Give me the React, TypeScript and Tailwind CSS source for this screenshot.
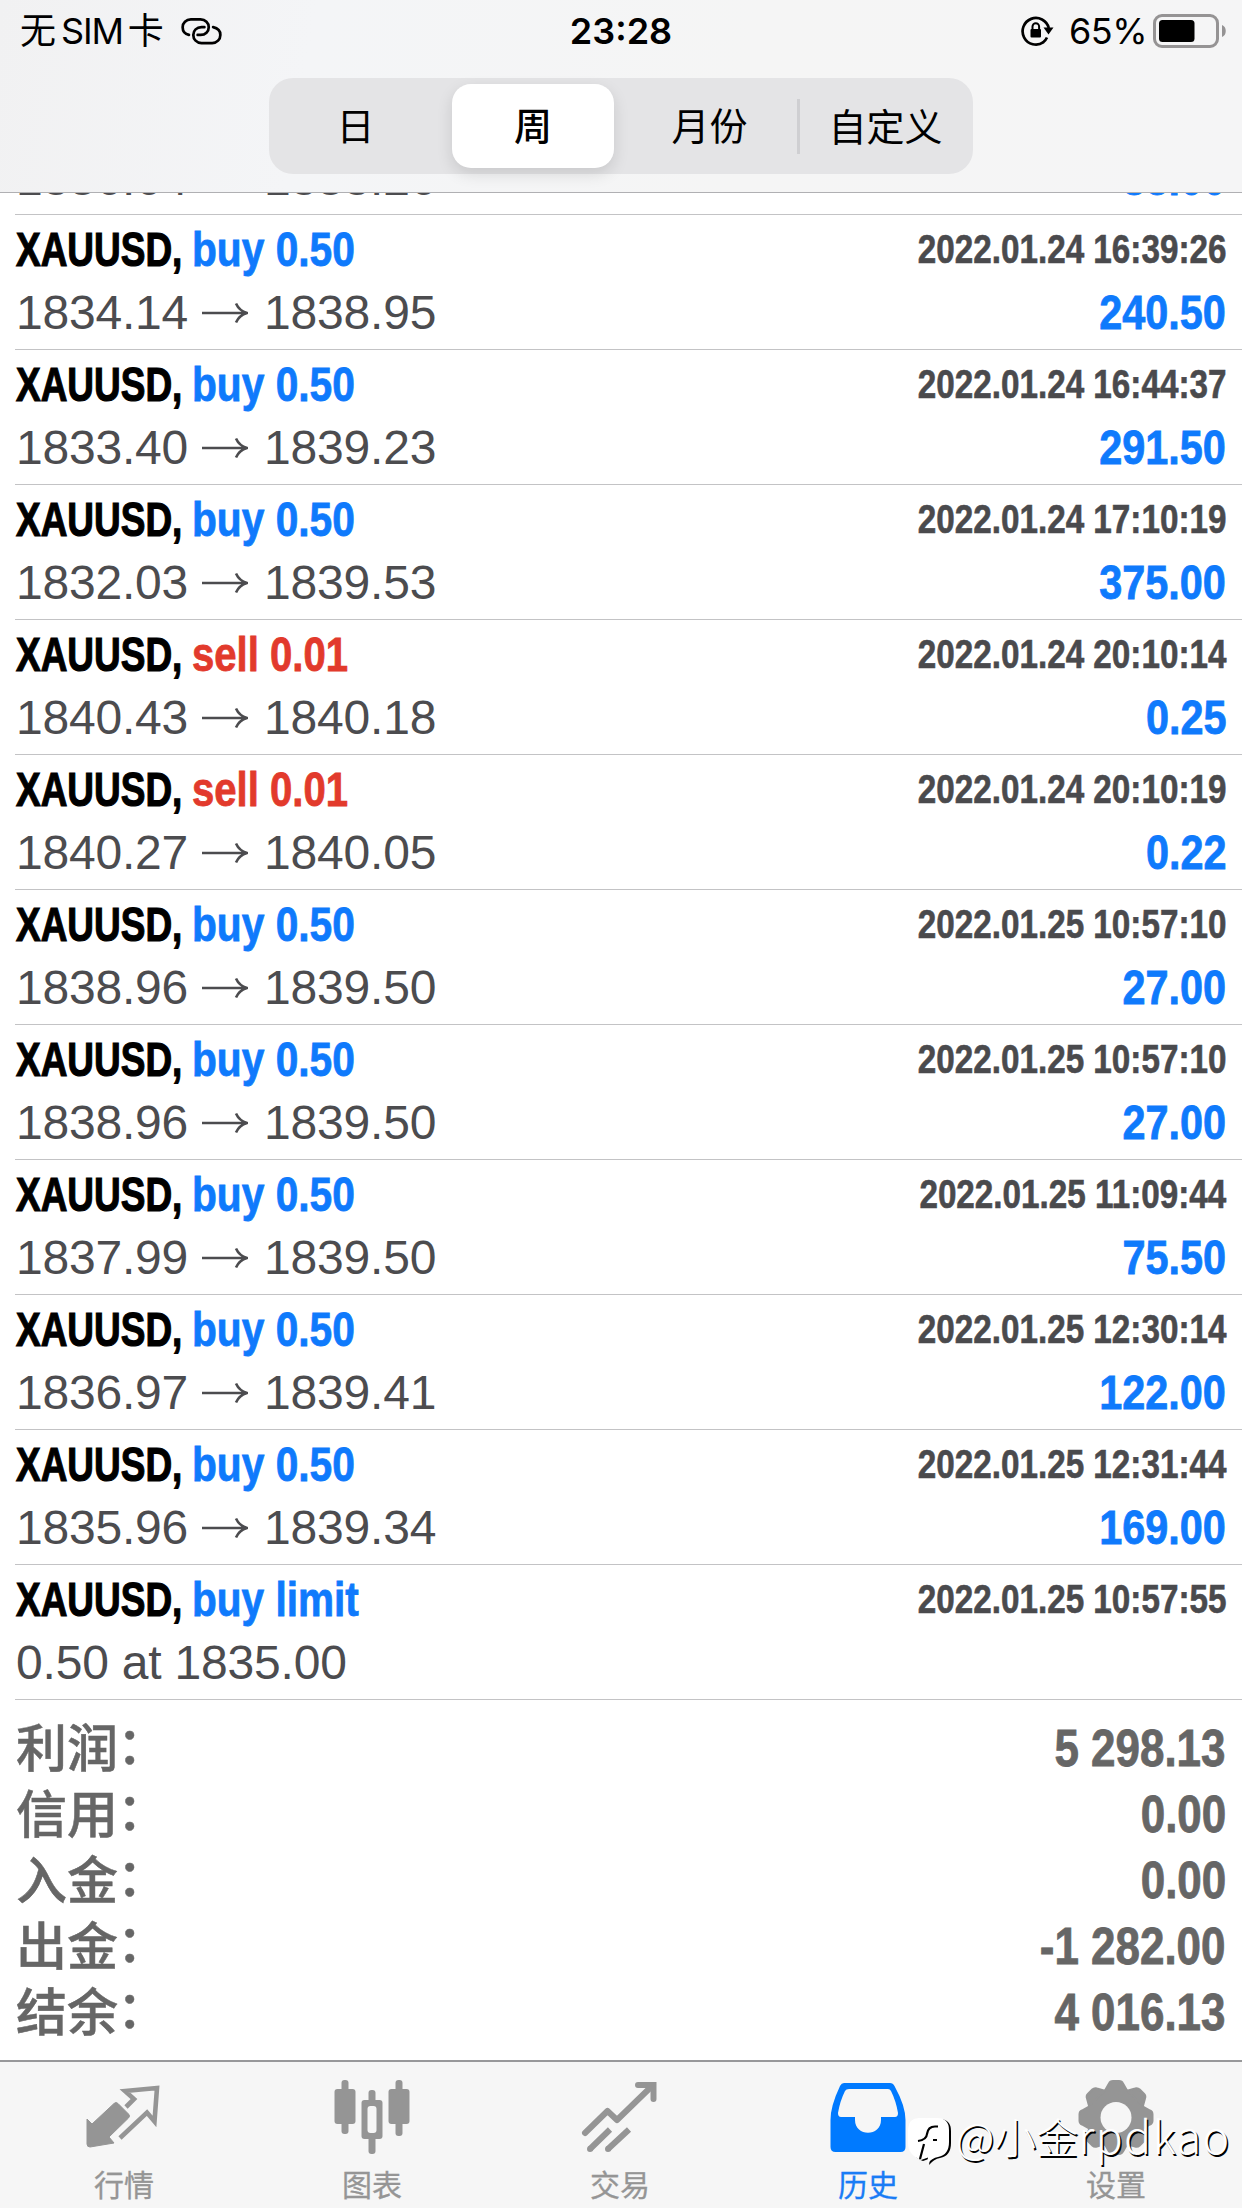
import React from "react";

type Side = "buy" | "sell" | "limit";
type Trade = { side: Side; action: string; from: string; to?: string; time: string; profit: string };

const trades: Trade[] = [
  { side: "buy", action: "buy 0.50", from: "1834.14", to: "1838.95", time: "2022.01.24 16:39:26", profit: "240.50" },
  { side: "buy", action: "buy 0.50", from: "1833.40", to: "1839.23", time: "2022.01.24 16:44:37", profit: "291.50" },
  { side: "buy", action: "buy 0.50", from: "1832.03", to: "1839.53", time: "2022.01.24 17:10:19", profit: "375.00" },
  { side: "sell", action: "sell 0.01", from: "1840.43", to: "1840.18", time: "2022.01.24 20:10:14", profit: "0.25" },
  { side: "sell", action: "sell 0.01", from: "1840.27", to: "1840.05", time: "2022.01.24 20:10:19", profit: "0.22" },
  { side: "buy", action: "buy 0.50", from: "1838.96", to: "1839.50", time: "2022.01.25 10:57:10", profit: "27.00" },
  { side: "buy", action: "buy 0.50", from: "1838.96", to: "1839.50", time: "2022.01.25 10:57:10", profit: "27.00" },
  { side: "buy", action: "buy 0.50", from: "1837.99", to: "1839.50", time: "2022.01.25 11:09:44", profit: "75.50" },
  { side: "buy", action: "buy 0.50", from: "1836.97", to: "1839.41", time: "2022.01.25 12:30:14", profit: "122.00" },
  { side: "buy", action: "buy 0.50", from: "1835.96", to: "1839.34", time: "2022.01.25 12:31:44", profit: "169.00" },
  { side: "limit", action: "buy limit", from: "0.50 at 1835.00", time: "2022.01.25 10:57:55", profit: "" },
];

const totals = [
  ["利润", "5 298.13"],
  ["信用", "0.00"],
  ["入金", "0.00"],
  ["出金", "-1 282.00"],
  ["结余", "4 016.13"],
];

const actionClass: Record<Side, string> = {
  buy: "scale-x-[0.848] text-[#0f7afc]",
  sell: "scale-x-[0.835] text-[#e23a2c]",
  limit: "scale-x-[0.845] text-[#0f7afc]",
};

function Arrow() {
  return (
    <svg className="ml-[14px] mr-[16px] h-[22px] w-[46px]" viewBox="0 0 46 22" fill="none" stroke="#4c4c4f" strokeWidth="2.600">
      <path d="M0 11H44M34 1.500C36 6 40 9.500 45 11C40 12.500 36 16 34 20.500" />
    </svg>
  );
}

function PriceLine({ from, to, profit }: { from: string; to?: string; profit: string }) {
  return (
    <div className="flex h-[56px] justify-between text-[48px] leading-[56px]">
      <div className="flex items-center pl-px tracking-[-0.2px] text-[#4c4c4f]">
        <span>{from}</span>
        {to && <Arrow />}
        {to && <span>{to}</span>}
      </div>
      <span className="inline-block origin-right scale-x-[0.862] font-bold text-[#0f7afc] [-webkit-text-stroke:0.8px_currentColor]">{profit}</span>
    </div>
  );
}

function TradeRow({ t }: { t: Trade }) {
  return (
    <div className="ml-[15px] h-[135px] whitespace-nowrap border-b border-[#c3c3c5] pr-4">
      <div className="flex h-[70px] justify-between font-bold leading-[70px]">
        <div className="flex pl-px text-[48px]">
          <div className="w-[176px]">
            <span className="inline-block origin-left scale-x-[0.77] text-black [-webkit-text-stroke:1.2px_currentColor]">XAUUSD,</span>
          </div>
          <span className={`inline-block origin-left [-webkit-text-stroke:0.8px_currentColor] ${actionClass[t.side]}`}>{t.action}</span>
        </div>
        <span className="inline-block origin-right scale-x-[0.831] text-[40px] leading-[68px] text-[#4a4a4d] [-webkit-text-stroke:0.6px_currentColor]">{t.time}</span>
      </div>
      <PriceLine from={t.from} to={t.to} profit={t.profit} />
    </div>
  );
}

function StatusBar() {
  return (
    <div className="grid h-[78px] grid-cols-3 font-['Inter','Noto_Sans_CJK_SC',sans-serif] text-[36px] leading-[63px] text-black">
      <div className="flex h-[62px] items-center gap-[17px] pl-[20px]">
        <div className="flex gap-[5px]">
          <span>无</span>
          <span className="tracking-[-1.2px]">SIM</span>
          <span>卡</span>
        </div>
        <svg className="h-[29px] w-[41px]" viewBox="0 0 42 30" fill="none" stroke="#000" strokeWidth="2.800" strokeLinecap="round">
          <path d="M8 18.500C4 17.500 1.500 14.500 1.500 10.500C1.500 6 5 2.500 10 2.500H20C25 2.500 28.500 6 28.500 10.500C28.500 15 25 18.500 20 18.500H17" />
          <path d="M33 10.500C37.500 11.500 40.500 14.500 40.500 18.500C40.500 23 37 27 32 27H21C16 27 12.500 23 12.500 18.500C12.500 14 16 10.500 21 10.500H24" />
        </svg>
      </div>
      <div className="text-center font-semibold">23:28</div>
      <div className="flex h-[62px] items-center justify-end pr-[14px]">
        <svg className="mr-[15px] h-[32px] w-[33px]" viewBox="0 0 33 32">
          <path d="M22.500 27.200A13.300 13.300 0 1 1 27.800 13" fill="none" stroke="#000" strokeWidth="2.700" />
          <path d="M26 22.500A13 13 0 0 1 22 27.500" fill="none" stroke="#000" strokeWidth="2.700" />
          <path d="M22.500 12.500H32.500L27.500 19.500Z" />
          <rect x="9.500" y="14" width="10.500" height="8.500" rx="1" />
          <path d="M11.500 15V11.500A3.300 3.300 0 0 1 18.100 11.500V15" fill="none" stroke="#000" strokeWidth="2" />
        </svg>
        <span className="mr-[6px] tracking-[-0.5px]">65%</span>
        <svg className="h-[36px] w-[75px]" viewBox="0 0 75 36">
          <rect x="1.500" y="2.500" width="63" height="31" rx="7.500" fill="none" stroke="#959394" strokeWidth="3" />
          <rect x="6" y="7" width="35.500" height="22" rx="3.500" fill="#000" />
          <path d="M69 12C74 13.500 74 22.500 69 24Z" fill="#959394" />
        </svg>
      </div>
    </div>
  );
}

function Segments() {
  return (
    <div className="mx-auto grid h-[96px] w-[704px] grid-cols-4 rounded-[24px] bg-[#e4e4e6] font-['Noto_Sans_CJK_SC',sans-serif] text-[38px] leading-[92px] text-black">
      <div className="pr-[3px] text-center">日</div>
      <div className="px-[7px] py-[6px]">
        <div className="h-[84px] rounded-[19px] bg-white text-center font-medium leading-[80px] shadow-[0_6px_16px_rgba(0,0,0,0.12)]">周</div>
      </div>
      <div className="pl-px text-center">月份</div>
      <div className="flex items-center">
        <div className="h-[55px] w-[3px] shrink-0 bg-[#cfcfd2]" />
        <div className="-mt-[2px] grow pr-[2px] text-center">自定义</div>
      </div>
    </div>
  );
}

const icons = [
  <svg key="q" className="h-[84px] w-[84px]" viewBox="0 0 84 84">
    <path d="M5 33L10 38L32 17.500Q34 15.500 36 17.500L46.500 28Q48.500 30 46.500 32L27 51L32 57L8 61Q5 61 5 58Z" fill="#959595" stroke="#959595" strokeWidth="1" strokeLinejoin="round" />
    <path d="M44 21L52 13L43 5L75 2L72.500 35.500L65 26.500L38 52" fill="none" stroke="#959595" strokeWidth="4.600" />
  </svg>,
  <svg key="c" className="h-[84px] w-[84px]" viewBox="0 0 84 84" fill="#959595">
    <rect x="11.500" y="-6" width="7" height="54" rx="3" /><rect x="4.500" y="3" width="21" height="35" rx="3" />
    <rect x="65.500" y="-6" width="7" height="56" rx="3" /><rect x="58.500" y="3" width="21" height="35" rx="3" />
    <rect x="38.500" y="4" width="7" height="64" rx="3" /><rect x="31.500" y="14" width="21" height="39" rx="3" />
    <rect x="37.500" y="20" width="9" height="27" rx="3" fill="#f6f6f6" />
  </svg>,
  <svg key="t" className="h-[84px] w-[84px]" viewBox="-1 0 84 84" fill="none" stroke="#959595" strokeWidth="6">
    <path d="M6 47L28.500 25L38 34L73 0" strokeLinecap="round" strokeLinejoin="round" />
    <path d="M59 -1H74.500V13" strokeLinecap="round" />
    <path d="M11 63L31 43.500M29 63L50 43.500" /><path d="M11 63H11.100M29 63H29.100" strokeLinecap="round" />
  </svg>,
  <svg key="h" className="h-[84px] w-[84px]" viewBox="0 0 84 84">
    <path d="M18 -3H64Q67 -3 68.500 0Q79.500 20 79.500 34V61Q79.500 66 74.500 66H9.500Q4.500 66 4.500 61V34Q4.500 20 14 0Q15.500 -3 18 -3Z" fill="#007aff" />
    <path d="M23 3H62Q64 3 65 5Q70 15 72 27Q72 31 69 31H55V34C55 51 29 51 29 34V31H15Q12 31 12 27Q14 15 19 5Q20 3 23 3Z" fill="#f6f6f6" />
  </svg>,
  <svg key="s" className="h-[84px] w-[84px]" viewBox="0 0 84 84">
    <g transform="translate(42 31.500)">
      <g fill="#959595" stroke="#959595" strokeWidth="2" strokeLinejoin="round">
        <circle r="29" />
        {[0, 45, 90, 135, 180, 225, 270, 315].map((a) => (
          <path key={a} d="M-11 -27L-7 -34Q-6 -36.500 -3 -36.500H3Q6 -36.500 7 -34L11 -27Z" transform={`rotate(${a})`} />
        ))}
      </g>
      <circle r="15.500" fill="#f6f6f6" />
    </g>
  </svg>,
];

function TabBar() {
  const names = ["行情", "图表", "交易", "历史", "设置"];
  return (
    <nav className="relative grid h-[148px] w-[1240px] shrink-0 grid-cols-5 font-['Noto_Sans_CJK_SC',sans-serif]">
      {names.map((n, i) => (
        <div key={n} className="flex flex-col items-center pt-[26px] [&>svg]:overflow-visible">
          {icons[i]}
          <span className={i === 3 ? "-mt-[4px] text-[30px] leading-[34px] text-[#1a7cf5] [-webkit-text-stroke:0.3px_currentColor]" : "-mt-[4px] text-[30px] leading-[34px] text-[#959595] [-webkit-text-stroke:0.3px_currentColor]"}>{n}</span>
        </div>
      ))}
      <div className="absolute left-[907px] top-[48px] flex items-start">
        <svg className="mr-[2px] mt-[2px] h-[54px] w-[47px] overflow-visible" viewBox="0 0 47 54">
          <path d="M12 8H30Q42 8 42 20V32Q42 45 31 47Q25 48 20 54L21 47.500L14 50Q1 45 1 33V19Q2 8 12 8Z" fill="#000" transform="translate(2 1)" />
          <path d="M12 8H30Q42 8 42 20V32Q42 45 31 47Q25 48 20 54L21 47.500L14 50Q1 45 1 33V19Q2 8 12 8Z" fill="#fff" />
          <path d="M31 16.500H28Q21 16.500 20 24Q19.500 30 11 31M17 34L13 49M26 30H30" stroke="#000" strokeWidth="2.200" fill="none" />
        </svg>
        <span className="whitespace-nowrap text-[42px] font-light leading-[54px] text-white [text-shadow:1.5px_1.5px_0_#000]">
          @小金<span className="text-[45px] tracking-[1.2px]">rpdkao</span>
        </span>
      </div>
    </nav>
  );
}

export default function App() {
  return (
    <div className="flex h-[2208px] w-[1242px] flex-col overflow-hidden bg-white font-['Liberation_Sans','Noto_Sans_CJK_SC',sans-serif]">
      <header className="h-[193px] shrink-0 border-b border-[#b0b0b3] bg-[linear-gradient(100deg,#f1f1f2_0%,#f4f5f7_25%,#f5f5f5_60%,#f5f5f6_100%)]">
        <StatusBar />
        <Segments />
      </header>
      <main className="min-h-0 grow overflow-hidden">
        <div className="ml-[15px] flex h-[22px] flex-col justify-end overflow-hidden border-b border-[#c3c3c5] pb-[7px] pr-4">
          <div className="h-[56px] shrink-0 whitespace-nowrap">
            <PriceLine from="1836.64" to="1838.26" profit="83.00" />
          </div>
        </div>
        {trades.map((t, i) => (
          <TradeRow key={i} t={t} />
        ))}
        <div className="px-4 pt-[16px] text-[51px] font-bold text-[#666]">
          {totals.map(([label, value]) => (
            <div key={label} className="flex h-[66px] justify-between whitespace-nowrap leading-[66px]">
              <span className="-mt-[4px] flex font-['Noto_Sans_CJK_SC',sans-serif] font-medium [-webkit-text-stroke:0.5px_currentColor]">
                {label}
                <span className="-mt-[3px] -ml-px">：</span>
              </span>
              <span className="inline-block origin-right scale-x-[0.862] [-webkit-text-stroke:0.8px_currentColor]">{value}</span>
            </div>
          ))}
        </div>
      </main>
      <footer className="h-[148px] shrink-0 border-t-2 border-[#98989a] bg-[#f6f6f6]">
        <div className="-mt-[2px]">
          <TabBar />
        </div>
      </footer>
    </div>
  );
}
